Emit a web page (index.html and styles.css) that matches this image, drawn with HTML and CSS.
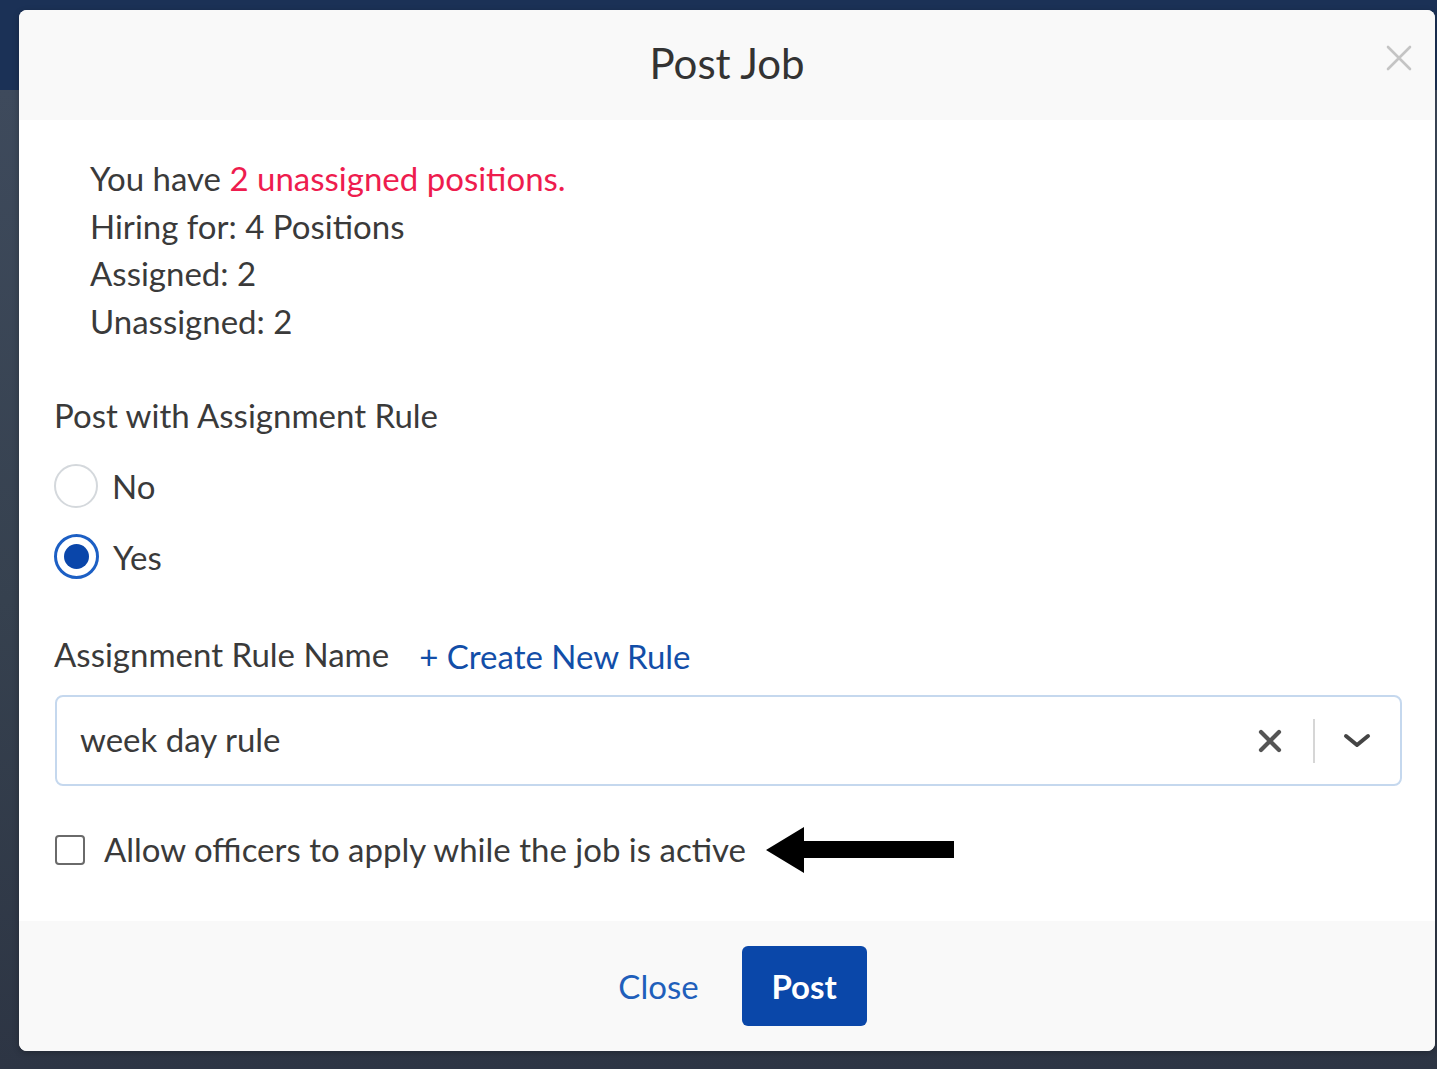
FILE: index.html
```html
<!DOCTYPE html>
<html lang="en">
<head>
<meta charset="UTF-8">
<meta name="viewport" content="width=device-width, initial-scale=1.0">
<title>Post Job</title>
<link rel="stylesheet" href="styles.css">
</head>
<body>
<div class="modal">
    <div class="modal-header">
        <h2>Post Job</h2>
        <button class="modal-close" type="button" aria-label="Close">
            <svg width="26" height="26" viewBox="0 0 26 26"><path d="M2 2L24 24M24 2L2 24" stroke="#c4c4c4" stroke-width="2.6" stroke-linecap="round"/></svg>
        </button>
    </div>

    <div class="modal-body">
        <div class="info">
            <div>You have <span class="alert">2 unassigned positions.</span></div>
            <div>Hiring for: 4 Positions</div>
            <div>Assigned: 2</div>
            <div>Unassigned: 2</div>
        </div>

        <div class="field-label rule-title">Post with Assignment Rule</div>

        <label class="radio-row first">
            <span class="radio"></span>
            <span>No</span>
        </label>
        <label class="radio-row">
            <span class="radio checked"></span>
            <span>Yes</span>
        </label>

        <div class="rule-name-row">
            <span class="field-label">Assignment Rule Name</span>
            <a class="create-link" href="#">+ Create New Rule</a>
        </div>

        <div class="select">
            <span class="select-value">week day rule</span>
            <span class="select-clear">
                <svg width="24" height="24" viewBox="0 0 24 24"><path d="M3 3L21 21M21 3L3 21" stroke="#555" stroke-width="4.2" stroke-linecap="round"/></svg>
            </span>
            <span class="select-divider"></span>
            <span class="select-arrow">
                <svg width="28" height="16" viewBox="0 0 28 16"><path d="M3 3L14 12L25 3" fill="none" stroke="#444" stroke-width="4" stroke-linecap="round" stroke-linejoin="round"/></svg>
            </span>
        </div>

        <div class="check-row">
            <span class="checkbox"></span>
            <span class="check-label">Allow officers to apply while the job is active</span>
            <svg class="pointer" width="190" height="46" viewBox="0 0 190 46"><path d="M0 23L38 0V14H188V31H38V46Z" fill="#000"/></svg>
        </div>
    </div>

    <div class="modal-footer">
        <button class="btn-link" type="button">Close</button>
        <button class="btn-primary" type="button">Post</button>
    </div>
</div>
</body>
</html>
```
FILE: styles.css
```css
body {
    margin: 0;
    height: 1069px;
    overflow: hidden;
    font-family: Lato, "Open Sans", Arial, sans-serif;
    color: #3a3a3a;
    background: linear-gradient(#1b3156 0, #1b3156 90px, #3e4a5c 90px, #36414f 600px, #2d3544 1069px);
}

.modal {
    width: 1416px;
    margin: 10px 0 0 19px;
    background-color: #fff;
    border-radius: 8px;
    overflow: hidden;
    box-shadow: 0 2px 6px rgba(0, 0, 0, 0.25);
}

.modal-header {
    height: 110px;
    background-color: #f9f9f9;
    display: flex;
    align-items: center;
    justify-content: center;
    position: relative;
}

.modal-header h2 {
    margin: 0 0 4px 0;
    font-size: 42px;
    font-weight: 400;
    color: #333;
}

.modal-close {
    position: absolute;
    right: 23px;
    top: 35px;
    border: none;
    background: none;
    padding: 0;
    width: 26px;
    height: 26px;
    cursor: pointer;
}

.modal-body {
    padding: 35px 35px 51px 35px;
    font-size: 33px;
}

.info {
    margin-left: 36px;
    line-height: 47.5px;
}

.alert {
    color: #ee1c4e;
}

.field-label {
    line-height: 40px;
}

.rule-title {
    margin-top: 50px;
}

.radio-row {
    display: flex;
    align-items: center;
    gap: 14px;
    height: 71px;
    cursor: pointer;
}

.radio-row.first {
    margin-top: 15px;
}

.radio {
    width: 40px;
    height: 40px;
    border: 2px solid #d4d8dc;
    border-radius: 50%;
    box-sizing: content-box;
    position: relative;
    background: #fff;
}

.radio.checked {
    border: 3px solid #1c5fc4;
    width: 39px;
    height: 39px;
}

.radio.checked::after {
    content: "";
    position: absolute;
    left: 7px;
    top: 7px;
    width: 25px;
    height: 25px;
    border-radius: 50%;
    background-color: #0a46aa;
}

.rule-name-row {
    margin-top: 40px;
    display: flex;
    align-items: center;
    gap: 30px;
    line-height: 40px;
}

.create-link {
    color: #124ea8;
    text-decoration: none;
    margin-top: 4px;
}

.select {
    margin: 19px -2px 0 1px;
    height: 91px;
    box-sizing: border-box;
    border: 2px solid #c5d8ee;
    border-radius: 8px;
    display: flex;
    align-items: center;
    padding: 0 29px 0 23px;
}

.select-value {
    flex: 1;
    margin-bottom: 4px;
}

.select-clear {
    display: flex;
    margin-right: 31px;
}

.select-divider {
    width: 2px;
    height: 44px;
    background-color: #d6d6d6;
    margin-right: 28px;
}

.select-arrow {
    display: flex;
}

.check-row {
    margin-top: 44px;
    height: 40px;
    display: flex;
    align-items: center;
}

.checkbox {
    width: 26px;
    height: 26px;
    border: 2px solid #6a6a6a;
    border-radius: 4px;
    margin: 0 19px 0 1px;
    flex-shrink: 0;
}

.check-label {
    color: #3a3a3a;
    margin-bottom: 2px;
}

.pointer {
    margin-left: 20px;
}

.modal-footer {
    height: 130px;
    background-color: #f9f9f9;
    display: flex;
    align-items: center;
    justify-content: center;
    padding-left: 10px;
}

.btn-link {
    font-family: inherit;
    font-size: 33px;
    color: #1f5fbb;
    background: none;
    border: none;
    padding: 0 21px;
    margin-right: 22px;
    cursor: pointer;
}

.btn-primary {
    font-family: inherit;
    font-size: 33px;
    font-weight: 700;
    color: #fff;
    background-color: #0a47a9;
    border: none;
    border-radius: 6px;
    width: 125px;
    height: 80px;
    cursor: pointer;
}
```
